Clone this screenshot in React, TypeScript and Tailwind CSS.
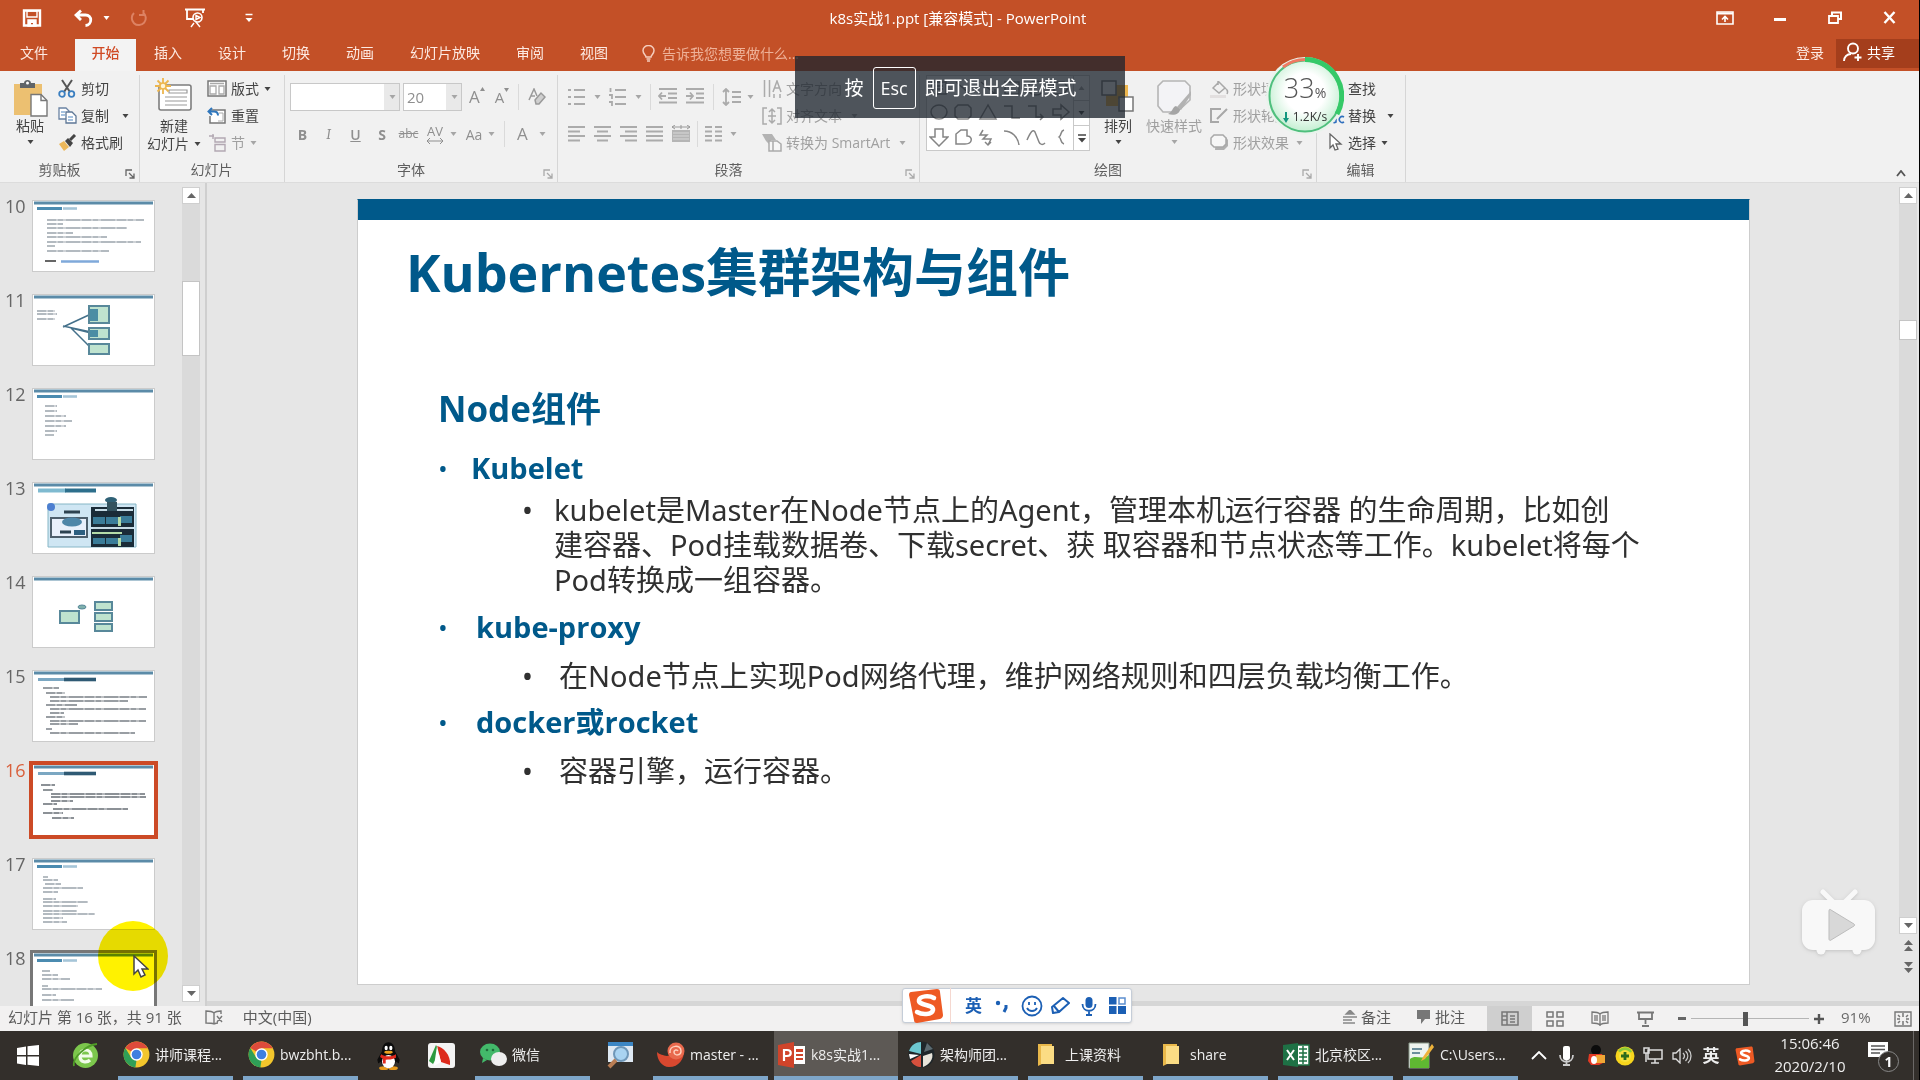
import React from "react";

type Kids = { children?: React.ReactNode };

const dark = "#444444";
const dim = "#a6a6a6";

function Svg({ w, h, children, className = "" }: { w: number; h: number; className?: string } & Kids) {
  return (
    <svg width={w} height={h} viewBox={`0 0 ${w} ${h}`} fill="none" aria-hidden="true" className={`shrink-0 ${className}`}>
      {children}
    </svg>
  );
}

function Caret({ c = dark, className = "" }: { c?: string; className?: string }) {
  return (
    <Svg w={7} h={4} className={className}>
      <path d="M0.5 0h6l-3 4z" fill={c} />
    </Svg>
  );
}

/* ---------- header ---------- */

function TitleBar() {
  return (
    <div className="relative flex h-[39px] items-center pb-[4px] text-white">
      <button aria-label="保存" className="ml-[22px]">
        <Svg w={20} h={18}>
          <path d="M2 1.5h16v15H2z" stroke="#fff" strokeWidth="2.4" />
          <path d="M5 2h10v6H5zM6 11h8v6H6z" stroke="#fff" strokeWidth="1.4" />
          <path d="M6 11h8v6h-3v-3H9v3H6z" fill="#fff" />
        </Svg>
      </button>
      <button aria-label="撤消" className="ml-[32px] flex items-center gap-[10px]">
        <Svg w={19} h={18}>
          <path d="M7 1.5L2 6l5 5M2.5 6h9c7 0 7 10 0 10.5" stroke="#fff" strokeWidth="2.8" />
        </Svg>
        <Caret c="#fff" />
      </button>
      <button aria-label="恢复" className="ml-[20px]" disabled>
        <Svg w={18} h={18}>
          <path d="M4 4a7 7 0 1 0 9-.5M13.5 1v5H9" stroke="#dd8263" strokeWidth="2" />
        </Svg>
      </button>
      <button aria-label="从头开始放映" className="ml-[36px]">
        <Svg w={22} h={20}>
          <path d="M1 1.5h20M3 2v9h6M19 2v3" stroke="#fff" strokeWidth="1.8" />
          <circle cx="13.5" cy="9.5" r="4.5" stroke="#fff" strokeWidth="1.6" />
          <path d="M12 7.5l4 2-4 2zM10 15l-3 4M12 14l4 5" stroke="#fff" strokeWidth="1.4" />
        </Svg>
      </button>
      <button aria-label="自定义快速访问工具栏" className="ml-[39px]">
        <Svg w={8} h={10}>
          <path d="M0.5 1.5h7" stroke="#fff" strokeWidth="1.5" />
          <path d="M0.5 5h7L4 9z" fill="#fff" />
        </Svg>
      </button>
      <h1 className="pointer-events-none absolute inset-x-0 top-0 pr-[3px] text-center text-[15px] leading-[36px]">
        k8s实战1.ppt [兼容模式] - PowerPoint
      </h1>
      <div className="mr-[2px] ml-auto flex items-center">
        <button aria-label="功能区显示选项" className="flex w-[55px] justify-center">
          <Svg w={18} h={14}>
            <path d="M1 1h16v12H1z" stroke="#fff" strokeWidth="1.6" />
            <path d="M1 2.5h16" stroke="#fff" strokeWidth="2" />
            <path d="M9 11V6M6 8.5L9 5.500l3 3" stroke="#fff" strokeWidth="1.6" />
          </Svg>
        </button>
        <button aria-label="最小化" className="flex w-[55px] justify-center pt-[4px]">
          <Svg w={12} h={3}><path d="M0 0h12v3H0z" fill="#fff" /></Svg>
        </button>
        <button aria-label="还原" className="flex w-[55px] justify-center">
          <Svg w={14} h={13}>
            <path d="M4 4V1.5h9V8h-3" stroke="#fff" strokeWidth="2" />
            <path d="M1 5h9v7H1z" stroke="#fff" strokeWidth="1.8" />
          </Svg>
        </button>
        <button aria-label="关闭" className="flex w-[55px] justify-center">
          <Svg w={13} h={13}><path d="M1.5 1l10 11M11.5 1l-10 11" stroke="#fff" strokeWidth="2.4" /></Svg>
        </button>
      </div>
    </div>
  );
}

const tabs = ["插入", "设计", "切换", "动画", "幻灯片放映", "审阅", "视图"];

function TabRow() {
  return (
    <nav className="flex h-[32px] text-[14px] text-[#fdeae3]">
      <button className="w-[75px] pr-[7px] pb-[5px]">文件</button>
      <button className="w-[61px] bg-[#f3f3f3] pb-[5px] font-medium text-[#d04a24]">开始</button>
      {tabs.map((t) => (
        <button key={t} className="px-[18px] pb-[5px]">{t}</button>
      ))}
      <button className="ml-[16px] flex items-center gap-[7px] pb-[3px] text-[#eeb198]">
        <Svg w={13} h={17}>
          <path d="M4 12c0-2-3-3-3-6.5a5.5 5 0 0 1 11 0C12 9 9 10 9 12zM4.5 14h4M5 16h3" stroke="#f5cdbd" strokeWidth="1.5" />
        </Svg>
        告诉我您想要做什么...
      </button>
      <div className="ml-auto flex">
        <button className="mr-[12px] pb-[5px]">登录</button>
        <button className="flex h-[29px] w-[83px] items-center gap-[5px] bg-[#a43e1c] pb-[3px] pl-[7px] text-white">
          <Svg w={19} h={20}>
            <circle cx="10" cy="6.5" r="5" stroke="#fff" strokeWidth="1.9" />
            <path d="M1 19c0-4 3-7 7-7M15 12v7M11.5 15.5h7" stroke="#fff" strokeWidth="1.9" />
          </Svg>
          共享
        </button>
      </div>
    </nav>
  );
}

/* ---------- ribbon ---------- */

function Group({ label, className, launcher, children }: { label: string; className: string; launcher?: string } & Kids) {
  return (
    <section aria-label={label} className={`flex shrink-0 flex-col pt-[4px] ${className}`}>
      <div className="flex h-[107px] flex-col border-r border-[#d6d6d6]">
        <div className="flex h-[83px]">{children}</div>
        <div className={`relative h-[24px] text-center text-[14px] leading-[24px] text-[#5e5e5e] ${launcher ? "pr-[20px]" : "pr-px"}`}>
          {label}
          {launcher && (
            <Svg w={10} h={10} className="absolute right-[4px] bottom-[3px]">
              <path d="M1 7V1h6M4 4l5 5M9 4.5V9H4.5" stroke={launcher} strokeWidth="1.3" />
            </Svg>
          )}
        </div>
      </div>
    </section>
  );
}

function Row({ icon, text, caret, off, gap = "gap-[4px]" }: { icon: React.ReactNode; text: string; caret?: string; off?: boolean; gap?: string }) {
  return (
    <button className={`flex h-[27px] items-center whitespace-nowrap text-[14px] ${gap} ${off ? "text-[#a0a0a0]" : "text-[#444]"}`}>
      <span className="flex w-[20px] shrink-0 justify-center">{icon}</span>
      <span>{text}</span>
      {caret && <Caret c={off ? dim : dark} className={caret} />}
    </button>
  );
}

function Clipboard() {
  return (
    <Group label="剪贴板" className="w-[140px]" launcher="#666">
      <button className="ml-[12px] flex w-[36px] flex-col items-center pt-[4px] text-[14px] leading-[18px] text-[#444]">
        <Svg w={36} h={38}>
          <path d="M2 5h28v31H2z" fill="#ecc071" />
          <path d="M8 9V4h4c0-4 7-4 7 0h4v5z" fill="#5f6468" />
          <circle cx="15.5" cy="4" r="1.5" fill="#fff" />
          <path d="M19 15.5h10l6 6V37H19z" fill="#fff" stroke="#777" strokeWidth="1.4" />
          <path d="M29 15.5v6h6" stroke="#777" strokeWidth="1.4" />
        </Svg>
        粘贴
        <Caret className="mt-[5px]" />
      </button>
      <div className="ml-[9px] flex flex-col">
        <Row text="剪切" icon={
          <Svg w={18} h={19}>
            <path d="M4 1l8 12M14 1L6 13" stroke="#555" strokeWidth="2" />
            <circle cx="4" cy="15" r="2.8" stroke="#3b7fc0" strokeWidth="1.8" />
            <circle cx="13.5" cy="15" r="2.8" stroke="#3b7fc0" strokeWidth="1.8" />
          </Svg>} />
        <Row text="复制" caret="ml-[9px]" icon={
          <Svg w={19} h={17}>
            <path d="M1 1h7l3 3v8H1z" fill="#fff" stroke="#6a83a3" strokeWidth="1.3" />
            <path d="M8 5h6l4 4v7H8z" fill="#fff" stroke="#5d7796" strokeWidth="1.3" />
            <path d="M3 5h4M3 8h4M10 10h5M10 13h5" stroke="#4f86c0" strokeWidth="1.2" />
          </Svg>} />
        <Row text="格式刷" icon={
          <Svg w={19} h={17}>
            <path d="M1 10l5-3 5 6-5 4z" fill="#ecb85b" />
            <path d="M7 7l3-3 5 5-3 4z" fill="#444" />
            <path d="M12 6l5-5" stroke="#444" strokeWidth="3" />
          </Svg>} />
      </div>
    </Group>
  );
}

function Slides() {
  return (
    <Group label="幻灯片" className="w-[145px]">
      <button className="ml-[5px] flex w-[58px] flex-col items-center pt-[3px] text-[14px] leading-[18px] text-[#444]">
        <Svg w={38} h={39}>
          <rect x="4" y="7" width="32" height="25" rx="2" fill="#fff" stroke="#7d7d7d" strokeWidth="1.6" />
          <path d="M14 12h18v3H14zM10 19h22M10 23h22M10 27h22" stroke="#9a9a9a" strokeWidth="1.2" />
          <path d="M8 0v16M0 8h16M2.5 2.5l11 11M13.5 2.5l-11 11" stroke="#edb64e" strokeWidth="1.8" />
          <circle cx="8" cy="8" r="3" fill="#fff4d6" stroke="#edb64e" strokeWidth="1.5" />
        </Svg>
        <span>新建</span>
        <span className="flex items-center gap-[5px] whitespace-nowrap">幻灯片<Caret /></span>
      </button>
      <div className="ml-[4px] flex flex-col">
        <Row text="版式" caret="ml-[1px]" icon={
          <Svg w={20} h={17}>
            <path d="M1 1h18v15H1z" fill="#fff" stroke="#777" strokeWidth="1.5" />
            <path d="M3 3.5h14M3 6h6v8H3zM12 6h5v8h-5z" stroke="#aaa" strokeWidth="1.3" />
          </Svg>} />
        <Row text="重置" icon={
          <Svg w={20} h={17}>
            <path d="M4 3h14v13H3V9" fill="#fff" stroke="#777" strokeWidth="1.5" />
            <path d="M12 6h4v8h-5" stroke="#aaa" />
            <path d="M5 1L1.5 4.500 5 8M2 4.500h5c3 0 4 2 4 4" stroke="#2f76bc" strokeWidth="2" />
          </Svg>} />
        <Row off text="节" caret="ml-[1px]" icon={
          <Svg w={18} h={18}>
            <path d="M1 2h5M5 0v5M7 4h10v4H7zM7 10.5h10V17H7z" stroke="#b2a8b2" strokeWidth="1.4" />
          </Svg>} />
      </div>
    </Group>
  );
}

const VSep = ({ className = "" }: { className?: string }) => <span className={`h-[26px] w-px shrink-0 bg-[#dadada] ${className}`} />;

function FontGroup() {
  return (
    <Group label="字体" className="w-[273px]" launcher="#aaa">
      <div className="flex w-full flex-col pt-[4px] pl-[5px] text-[#8f8f8f]">
        <div className="flex h-[36px] items-center">
          <select aria-label="字体" className="h-[28px] w-[110px] appearance-none border border-[#c8c8c8] bg-white bg-[linear-gradient(to_left,#e9e9e9_15px,transparent_15px)]"><option></option></select>
          <Caret c={dim} className="-ml-[11px] mr-[4px]" />
          <select aria-label="字号" defaultValue="20" className="ml-[3px] h-[28px] w-[59px] appearance-none border border-[#c8c8c8] bg-white bg-[linear-gradient(to_left,#e9e9e9_15px,transparent_15px)] pl-[3px] text-[15px]"><option>20</option></select>
          <Caret c={dim} className="-ml-[11px] mr-[4px]" />
          <button aria-label="增大字号" className="ml-[7px] flex text-[17px]">A<Svg w={5} h={4} className="mt-[3px]"><path d="M0 4h5L2.500 0z" fill="#8f8f8f" /></Svg></button>
          <button aria-label="减小字号" className="ml-[10px] flex text-[15px]">A<Svg w={5} h={4} className="mt-[2px]"><path d="M0 0h5L2.500 4z" fill="#8f8f8f" /></Svg></button>
          <VSep className="ml-[9px]" />
          <button aria-label="清除格式" className="ml-[9px]">
            <Svg w={18} h={18}>
              <path d="M1 12L6 1l3 7M3 8h4" stroke="#9a9a9a" strokeWidth="1.5" />
              <path d="M7 12l6-7 4 4-6 7H8z" stroke="#9a9a9a" strokeWidth="1.5" fill="#cfcfcf" />
            </Svg>
          </button>
        </div>
        <div className="flex h-[38px] items-center text-[14px]">
          <button className="w-[25px] font-bold">B</button>
          <button className="w-[27px] font-serif italic">I</button>
          <button className="w-[27px] font-semibold underline">U</button>
          <button className="w-[26px] font-bold">S</button>
          <button className="w-[27px] text-[12px] line-through">abc</button>
          <button aria-label="字符间距" className="flex w-[39px] items-center justify-center gap-[6px]">
            <span className="flex flex-col items-center text-[13px] leading-[14px]">AV
              <Svg w={18} h={6}><path d="M1 3h16M4 0L1 3l3 3M14 0l3 3-3 3" stroke="#8f8f8f" /></Svg>
            </span>
            <Caret c={dim} />
          </button>
          <button className="flex w-[39px] items-center justify-center gap-[6px]">Aa<Caret c={dim} /></button>
          <VSep className="ml-[4px]" />
          <button className="ml-[12px] flex items-center gap-[11px] text-[17px]">A<Caret c={dim} /></button>
        </div>
      </div>
    </Group>
  );
}

function Lines({ d }: { d: string }) {
  return <Svg w={20} h={18}><path d={d} stroke="#ababab" strokeWidth="1.8" /></Svg>;
}

function Paragraph() {
  return (
    <Group label="段落" className="w-[362px]" launcher="#aaa">
      <div className="flex w-[200px] shrink-0 flex-col pt-[4px] pl-[9px]">
        <div className="flex h-[36px] items-center">
          <button aria-label="项目符号" className="flex items-center gap-[7px]"><Lines d="M1 2h3M1 9h3M1 16h3M7 2h11M7 9h11M7 16h11" /><Caret c={dim} /></button>
          <button aria-label="编号" className="ml-[7px] flex items-center gap-[7px]"><Lines d="M2.5 0v4M1 7h3v4M1 14h3v4M7 2h11M7 9h11M7 16h11" /><Caret c={dim} /></button>
          <VSep className="ml-[8px]" />
          <button aria-label="减少缩进量" className="ml-[7px]"><Lines d="M1 1h18M10 5.5h9M10 10h9M1 14.5h18M8 8H1M4 4.5L1 8l3 3.5" /></button>
          <button aria-label="增加缩进量" className="ml-[7px]"><Lines d="M1 1h18M11 5.5h8M11 10h8M1 14.5h18M1 8h7M5 4.5L8 8l-3 3.500" /></button>
          <VSep className="ml-[8px]" />
          <button aria-label="行距" className="ml-[8px] flex items-center gap-[5px]"><Lines d="M4 1v16M1 4l3-3 3 3M1 14l3 3 3-3M10 4h9M10 9h9M10 14h9" /><Caret c={dim} /></button>
        </div>
        <div className="flex h-[38px] items-center gap-[6px]">
          <button aria-label="左对齐"><Lines d="M1 2h17M1 6.5h12M1 11h17M1 15.5h12" /></button>
          <button aria-label="居中"><Lines d="M1 2h17M4 6.5h11M1 11h17M4 15.5h11" /></button>
          <button aria-label="右对齐"><Lines d="M1 2h17M6 6.5h12M1 11h17M6 15.5h12" /></button>
          <button aria-label="两端对齐"><Lines d="M1 2h17M1 6.5h17M1 11h17M1 15.5h17" /></button>
          <button aria-label="分散对齐">
            <Svg w={20} h={18}>
              <path d="M1 5h18v12H1z" fill="#b5b5b5" />
              <path d="M1 2h18M4 0L1 2l3 2M16 0l3 2-3 2M10 0v4" stroke="#999" />
              <path d="M2 8h16M2 11h16M2 14h16" stroke="#d8d8d8" />
            </Svg>
          </button>
          <VSep />
          <button aria-label="分栏" className="flex items-center gap-[6px]"><Lines d="M1 2h7M1 6.5h7M1 11h7M1 15.5h7M11 2h7M11 6.5h7M11 11h7M11 15.5h7" /><Caret c={dim} /></button>
        </div>
      </div>
      <div className="ml-[4px] flex flex-col">
        <Row off text="文字方向" caret="ml-[5px]" icon={
          <Svg w={19} h={18}><path d="M1.5 0v17M6.5 0v17M10 12l4-11 4 11M11.5 8h5M11 14v4M17 14v4" stroke="#ababab" strokeWidth="1.5" /></Svg>} />
        <Row off text="对齐文本" caret="ml-[5px]" icon={
          <Svg w={20} h={18}><path d="M5 1H1v16h4M15 1h4v16h-4M10 2v14M7 5l3-3 3 3M7 13l3 3 3-3M6 9h8" stroke="#ababab" strokeWidth="1.5" /></Svg>} />
        <Row off text="转换为 SmartArt" caret="ml-[5px]" icon={
          <Svg w={20} h={19}>
            <path d="M0 1h10l4 6H9l-2 4-3-3z" fill="#b3b3b3" />
            <path d="M7 8h8l4 3v7H7zM11 8v10" fill="#f6f6f6" stroke="#ababab" strokeWidth="1.5" />
          </Svg>} />
      </div>
    </Group>
  );
}

const shapes = [
  "M3 3h14v12H3zM6 7h8M6 10h8", "M3 3l14 12", "M3 3l14 12M17 10v5h-5", "M3 3h14v12H3z", "M2 9a8 7 0 1 0 16 0 8 7 0 1 0-16 0", "M3 3h10l4 6-4 6H3z",
  "M2 9a8 7 0 1 0 16 0 8 7 0 1 0-16 0", "M5 2h10l3 3v8l-3 3H5l-3-3V5z", "M10 2L2 16h16z", "M2 3h8v12h8", "M2 3h8v11h7M14 11l3 3-3 3", "M2 6h8V2l8 7-8 7v-4H2z",
  "M6 1h8v8h5l-9 9-9-9h5z", "M3 16V6l5-4h6v6c6 0 6 8-2 8z", "M5 2L2 7h7l-4 4h8l-3 6M7 14l3 3 3-3", "M2 3c8 0 14 6 15 14", "M1 12C5 3 7 1 9 4l4 10c1 3 4 3 6 1", "M13 2c-4 1-2 5-5 7 3 2 1 6 5 7",
];

function Drawing() {
  return (
    <Group label="绘图" className="w-[397px]" launcher="#aaa">
      <div className="ml-[6px] flex h-[76px] w-[164px] shrink-0 border border-[#c9c9c9] bg-white">
        <div className="grid flex-1 grid-cols-6 grid-rows-3">
          {shapes.map((d, i) => (
            <button key={i} aria-label={`形状 ${i + 1}`} className="flex items-center justify-center">
              <Svg w={20} h={19}><path d={d} stroke="#858585" strokeWidth="1.5" /></Svg>
            </button>
          ))}
        </div>
        <div className="flex w-[16px] flex-col divide-y divide-[#c9c9c9] border-l border-[#c9c9c9]">
          <button aria-label="上一行" className="flex flex-1 items-center justify-center"><Caret c={dim} className="rotate-180" /></button>
          <button aria-label="下一行" className="flex flex-1 items-center justify-center"><Caret /></button>
          <button aria-label="其他" className="flex flex-1 items-center justify-center">
            <Svg w={8} h={9}><path d="M0 1h8" stroke={dark} strokeWidth="1.5" /><path d="M0 4h8L4 8.500z" fill={dark} /></Svg>
          </button>
        </div>
      </div>
      <button className="ml-[10px] flex w-[36px] flex-col items-center pt-[4px] text-[14px] leading-[18px] text-[#444]">
        <Svg w={36} h={38}>
          <path d="M14 6h14v14H14zM6 15h12v12H6z" fill="#edb64e" />
          <path d="M2 2h14v14H2zM19 18h14v14H19z" fill="#fff" stroke="#777" strokeWidth="1.5" />
        </Svg>
        排列
        <Caret className="mt-[5px]" />
      </button>
      <button className="ml-[8px] flex w-[60px] flex-col items-center pt-[4px] text-[14px] leading-[18px] text-[#a0a0a0]">
        <Svg w={38} h={38}>
          <path d="M8 2h22l5 5v14L22 33H8l-5-6V7z" fill="#f3f3f6" stroke="#b5b5b5" strokeWidth="1.6" />
          <path d="M36 12L22 28l4 3 10-15z" fill="#b2b2b2" />
          <path d="M21 27c-4 1-3 6-8 8 6 2 12 0 12-5z" fill="#a5a5a5" />
        </Svg>
        <span className="whitespace-nowrap">快速样式</span>
        <Caret c={dim} className="mt-[5px]" />
      </button>
      <div className="ml-[5px] flex flex-col">
        <Row off text="形状填充" caret="ml-[1px]" icon={
          <Svg w={19} h={18}><path d="M3 8l6-6 6 6-6 5zM8 5V1M15 8c3 2 3 4 2 6" stroke="#a8a8a8" strokeWidth="1.5" /><path d="M0 15h16v3H0z" fill="#e2dfdf" /></Svg>} />
        <Row off text="形状轮廓" caret="ml-[1px]" icon={
          <Svg w={19} h={17}><path d="M11 2H1v13h8M17 2L7 12" stroke="#a8a8a8" strokeWidth="2" /></Svg>} />
        <Row off text="形状效果" caret="ml-[3px]" icon={
          <Svg w={19} h={17}><path d="M6 3h10l2 3v6l-4 4H5z" fill="#b0b0b0" /><path d="M4 1h9l3 3v6l-3 3H4l-3-3V4z" fill="#f6f6f6" stroke="#a8a8a8" strokeWidth="1.5" /></Svg>} />
      </div>
    </Group>
  );
}

function Editing() {
  return (
    <Group label="编辑" className="w-[89px]">
      <div className="ml-[9px] flex flex-col">
        <Row text="查找" gap="gap-[2px]" icon={<Svg w={16} h={16}><circle cx="9" cy="6" r="4.5" stroke="#555" strokeWidth="2" /><path d="M6 10l-5 5" stroke="#555" strokeWidth="2" /></Svg>} />
        <Row text="替换" gap="gap-[2px]" caret="ml-[9px]" icon={
          <Svg w={18} h={17}><path d="M2 3h8v4M7 5l3 3 3-3" stroke="#555" strokeWidth="1.3" /><path d="M9 10a3 3 0 1 0 0 5V9M17 10a3 3 0 1 0 0 5" stroke="#2f6fbd" strokeWidth="1.6" /></Svg>} />
        <Row text="选择" gap="gap-[2px]" caret="ml-[3px]" icon={
          <Svg w={14} h={19}><path d="M1 1v14l3-3 2 5 3-1-2-5h5z" fill="#fff" stroke="#666" strokeWidth="1.3" /></Svg>} />
      </div>
    </Group>
  );
}

function SpeedBall() {
  return (
    <div className="absolute top-[57px] left-[1266px] size-[78px]">
      <svg viewBox="0 0 78 78" aria-hidden="true" className="absolute inset-0">
        <defs>
          <radialGradient id="ball" cx="50%" cy="45%" r="55%">
            <stop offset="0.5" stopColor="#ffffff" />
            <stop offset="1" stopColor="#c4efd2" />
          </radialGradient>
        </defs>
        <circle cx="39" cy="39" r="39" fill="#e9f3ec" />
        <circle cx="39" cy="39" r="35.5" fill="url(#ball)" stroke="#4fbf7d" strokeWidth="2" />
        <path d="M39 2.5A36.5 36.5 0 0 1 71 57" fill="none" stroke="#35c968" strokeWidth="5" />
        <path d="M17 10A36.5 36.5 0 0 1 39 2.5" fill="none" stroke="#ef7a62" strokeWidth="3" />
      </svg>
      <div className="relative flex h-full flex-col items-center pt-[15px] text-[#555]">
        <span className="text-[27px] leading-[32px] font-light">33<span className="text-[14px] font-normal">%</span></span>
        <span className="flex items-center gap-[4px] text-[12px] leading-[16px] text-[#333]">
          <Svg w={6} h={11}><path d="M2 0h2v6h2l-3 5-3-5h2z" fill="#13977f" /></Svg>1.2K/s
        </span>
      </div>
    </div>
  );
}

function EscHint() {
  return (
    <div role="status" className="absolute top-[56px] left-1/2 flex h-[62px] w-[330px] -translate-x-1/2 items-center justify-center gap-[9px] bg-[#1c242e]/77 pt-[2px] pl-[2px] text-[19px] whitespace-nowrap text-white">
      按
      <kbd className="flex h-[42px] w-[43px] items-center justify-center rounded-[3px] border border-white font-[inherit] text-[18px]">Esc</kbd>
      即可退出全屏模式
    </div>
  );
}

/* ---------- thumbnails ---------- */

type Bar = [number, number, number];

function TextBars({ bars, c = "#b3bac0" }: { bars: Bar[]; c?: string }) {
  return (
    <g stroke={c} strokeWidth="1.8">
      {bars.map(([x, y, w], i) => (
        <g key={i}>
          <path d={`M${x} ${y}h${w}`} strokeOpacity="0.65" />
          <path d={`M${x} ${y}h${w}`} strokeDasharray="9 2 5 3 14 2" />
        </g>
      ))}
    </g>
  );
}

const titleLong = (
  <>
    <path d="M5 8.5h26" stroke="#7ba7c2" strokeWidth="3" />
    <path d="M31 8.5h32" stroke="#2f5a74" strokeWidth="3.6" />
  </>
);
const titleShort = (
  <>
    <path d="M4 7.5h25" stroke="#4b8bb0" strokeWidth="3" />
    <path d="M30 7.5h14" stroke="#a5c5d8" strokeWidth="2.6" />
  </>
);

const green = { fill: "#bfe3cf", stroke: "#58889a", strokeWidth: 2 };

const thumbs: { n: number; art: React.ReactNode }[] = [
  { n: 10, art: <>{titleShort}<TextBars bars={[[14, 19, 97], [14, 23, 16], [14, 27, 80], [14, 32, 26], [14, 36, 60], [14, 41, 94], [14, 45, 8], [14, 50, 62]]} /><path d="M12 60h11" stroke="#666" strokeWidth="2" /><path d="M28 60.5h38" stroke="#7fa9da" strokeWidth="2.4" /></> },
  { n: 11, art: <>
      <TextBars bars={[[4, 16, 18], [4, 19, 20], [4, 24, 18]]} />
      <path d="M30 32l28-13M38 33l20 5M38 33l18 18M30 31l28 6" stroke="#44708a" strokeWidth="1.5" />
      <rect x="56" y="11" width="20" height="17" {...green} /><rect x="56" y="33" width="20" height="11" {...green} /><rect x="56" y="49" width="20" height="10" {...green} />
      <path d="M57 14h8v12h-8zM57 35h8v7h-8z" fill="#4b8da4" />
    </> },
  { n: 12, art: <>{titleShort}<TextBars bars={[[12, 17, 12], [12, 22, 12], [12, 27, 21], [12, 32, 27], [12, 37, 21], [12, 42, 12], [12, 46, 9]]} /></> },
  { n: 13, art: <>
      <path d="M5 7.5h28" stroke="#7fbad0" strokeWidth="4" /><path d="M32 7.5h31" stroke="#2d6f8c" strokeWidth="4" />
      <path d="M15 21h88v43H15z" fill="#cfe6f3" stroke="#86b6c6" />
      <circle cx="18" cy="24" r="4" fill="#4d7fd0" />
      <path d="M18 35h36v19H18z" fill="#e8f0fb" stroke="#4d5f6c" strokeWidth="2" />
      <ellipse cx="39" cy="39" rx="10" ry="4.500" fill="#4e86a8" />
      <path d="M31 29h16M27 49h11" stroke="#2c4250" strokeWidth="3" /><path d="M41 47h11v5H41z" fill="#2c5f80" />
      <path d="M58 24h43v20H58zM58 46h43v18H58z" fill="#1a2c38" />
      <path d="M60 34h12v7H60zM73 34h12v7H73zM87 33h12v7H87zM60 55h12v6H60zM73 55h12v6H73zM87 52h12v7H87z" fill="#3a7c98" />
      <path d="M85 34h3v9h-3zM59 49h30v2H59zM85 55h3v8h-3z" fill="#b5dca8" />
      <path d="M62 27h38M60 45h40" stroke="#c7dce6" strokeWidth="2" />
      <ellipse cx="78" cy="17" rx="6" ry="3" fill="#2f6176" /><path d="M74 19h10v9H74z" fill="#34535f" />
    </> },
  { n: 14, art: <>
      <rect x="27" y="34" width="19" height="12" {...green} /><ellipse cx="49" cy="30" rx="4" ry="2" fill="#7fb0ac" stroke="#58889a" />
      <rect x="62" y="25" width="17" height="8" {...green} /><rect x="62" y="36" width="17" height="8" {...green} /><rect x="62" y="47" width="17" height="7" {...green} />
    </> },
  { n: 15, art: <>{titleLong}<TextBars c="#999ea3" bars={[[10, 17, 16], [13, 22, 19], [17, 26, 97], [17, 30, 78], [13, 34, 31], [17, 38, 96], [17, 42, 14], [13, 46, 19], [17, 50, 96], [17, 53, 28], [13, 58, 6], [17, 62, 85]]} /></> },
  { n: 16, art: <>{titleLong}<TextBars c="#8c9196" bars={[[8, 20, 14], [10, 25, 10], [18, 29, 94], [18, 32, 95], [18, 36, 22], [10, 39, 14], [20, 44, 75], [10, 48, 20], [19, 53, 22]]} /></> },
  { n: 17, art: <>{titleShort}<TextBars bars={[[10, 18, 5], [10, 21, 15], [12, 25, 16], [10, 29, 40], [10, 33, 15], [10, 40, 13], [10, 43, 45], [10, 47, 35], [10, 52, 34], [10, 55, 52], [10, 59, 20], [10, 63, 24]]} /></> },
  { n: 18, art: <>{titleShort}<TextBars bars={[[9, 18, 8], [9, 22, 16], [9, 26, 28], [9, 33, 6], [9, 36, 60], [9, 42, 14], [9, 47, 32]]} /></> },
];

function ScrollButton({ up, label }: { up?: boolean; label: string }) {
  return (
    <button aria-label={label} className="flex h-[17px] w-full shrink-0 items-center justify-center border border-[#cfcfcf] bg-white">
      <Svg w={9} h={5} className={up ? "rotate-180" : ""}><path d="M0 0h9L4.500 5z" fill="#666" /></Svg>
    </button>
  );
}

function ThumbPane() {
  return (
    <aside className="flex w-[207px] shrink-0 border-r-2 border-[#cfcfcf] pt-[4px]">
      <ol className="flex min-h-0 flex-1 flex-col gap-[24px] overflow-hidden pt-[14px]">
        {thumbs.map(({ n, art }) => (
          <li key={n} className="relative flex h-[70px] shrink-0">
            <span className={`w-[33px] shrink-0 pl-[5px] text-[18px] leading-[10px] ${n === 16 ? "text-[#d9603c]" : "text-[#666]"}`}>{n}</span>
            <button
              aria-label={`幻灯片 ${n}`}
              className={
                n === 16 ? "h-[70px] outline-4 outline-[#cc4a26]" : n === 18 ? "h-[70px] outline-3 outline-[#777]" : "h-[70px] outline outline-[#cbcbcb]"
              }
            >
              <svg width="121" height="70" viewBox="0 0 121 70" fill="none" aria-hidden="true" className="bg-white">
                <path d="M1 2h119" stroke="#5b8ba8" strokeWidth="3" />
                {art}
              </svg>
            </button>
            {n === 18 && (
              <>
                <span className="absolute top-[-32px] left-[98px] size-[70px] rounded-full bg-[#fff200] mix-blend-multiply" />
                <Svg w={16} h={24} className="absolute top-[2px] left-[133px]">
                  <path d="M1 1v18l4-4 3 7 4-2-3-6h6z" fill="#fff" stroke="#444" strokeWidth="1.5" />
                </Svg>
              </>
            )}
          </li>
        ))}
      </ol>
      <div className="mr-[5px] mb-[4px] flex w-[18px] flex-col bg-[#dadada]">
        <ScrollButton up label="向上滚动" />
        <div className="mt-[77px] h-[75px] border border-[#c4c4c4] bg-white" />
        <div className="flex-1" />
        <ScrollButton label="向下滚动" />
      </div>
    </aside>
  );
}

/* ---------- slide ---------- */

function Item({ title, indent, body, className, bodyClass }: { title: string; indent: string; body: React.ReactNode; className: string; bodyClass: string }) {
  return (
    <li className={className}>
      <div className="flex items-center text-[29px] leading-[36px] font-bold text-[#00598a]">
        <span className={`${indent} text-[26px] font-normal`}>•</span>{title}
      </div>
      <ul>
        <li className={`flex font-['Noto_Sans','Noto_Sans_CJK_SC',sans-serif] text-[29px] leading-[35px] whitespace-nowrap text-[#303030] ${bodyClass}`}>{body}</li>
      </ul>
    </li>
  );
}

function Slide() {
  return (
    <article className="flex-1 border border-[#cdcdcd] border-t-[#00598a] bg-white">
      <div className="h-[20px] bg-[#00598a]" />
      <h2 className="mt-[14px] pl-[48px] text-[52px] leading-[76px] font-bold text-[#00598a]">Kubernetes集群架构与组件</h2>
      <div className="mt-[74px] pl-[80px]">
        <h3 className="text-[35px] leading-[50px] font-bold text-[#00598a]">Node组件</h3>
        <ul>
          <Item
            title="Kubelet"
            indent="w-[33px]"
            className="mt-[16px]"
            bodyClass="mt-[6px] pl-[84px]"
            body={<><span className="w-[32px]">•</span><p>kubelet是Master在Node节点上的Agent，管理本机运行容器 的生命周期，比如创<br />建容器、Pod挂载数据卷、下载secret、获 取容器和节点状态等工作。kubelet将每个<br />Pod转换成一组容器。</p></>}
          />
          <Item
            title="kube-proxy"
            indent="w-[38px]"
            className="mt-[12px]"
            bodyClass="mt-[13px] pl-[84px]"
            body={<><span className="w-[37px]">•</span><p>在Node节点上实现Pod网络代理，维护网络规则和四层负载均衡工作。</p></>}
          />
          <Item
            title="docker或rocket"
            indent="w-[38px]"
            className="mt-[11px]"
            bodyClass="mt-[13px] pl-[84px]"
            body={<><span className="w-[37px]">•</span><p>容器引擎，运行容器。</p></>}
          />
        </ul>
      </div>
    </article>
  );
}

function Stage() {
  return (
    <main className="flex min-w-0 flex-1 flex-col">
      <div className="flex min-h-0 flex-1">
        <div className="flex min-w-0 flex-1 pt-[16px] pr-[149px] pb-[16px] pl-[150px]"><Slide /></div>
        <div className="mt-[4px] mr-[2px] flex w-[18px] flex-col items-center">
          <div className="flex w-full flex-1 flex-col bg-[#dadada]">
            <ScrollButton up label="向上滚动" />
            <div className="mt-[116px] h-[20px] border border-[#c4c4c4] bg-white" />
            <div className="flex-1" />
            <ScrollButton label="向下滚动" />
          </div>
          <button aria-label="上一张幻灯片" className="mt-[6px]"><Svg w={9} h={12}><path d="M0 5h9L4.500 0zM0 11h9L4.500 6z" fill="#666" /></Svg></button>
          <button aria-label="下一张幻灯片" className="mt-[9px] mb-[28px]"><Svg w={9} h={12}><path d="M0 1h9L4.500 6zM0 7h9l-4.500 5z" fill="#666" /></Svg></button>
        </div>
      </div>
      <div className="h-[5px] bg-[#d6d6d6]" />
    </main>
  );
}

/* ---------- status bar ---------- */

function StatusBar() {
  return (
    <footer className="flex h-[25px] shrink-0 items-center bg-[#f2f1f1] pr-[7px] pb-[3px] text-[15px] leading-[22px] whitespace-nowrap text-[#5c5c5c]">
      <span className="ml-[8px]">幻灯片 第 16 张，共 91 张</span>
      <button aria-label="拼写检查" className="ml-[23px]">
        <Svg w={19} h={15}><path d="M9 3v11M9 3C7 1 4 1 1 1v12c3 0 6 0 8 1M9 3c2-2 4-2 7-2v3M9 14c2-1 3-1 4-1M12 6l5 6M17 6l-5 6" stroke="#777" strokeWidth="1.4" /></Svg>
      </button>
      <button className="ml-[19px]">中文(中国)</button>
      <div className="-mb-[3px] ml-auto flex h-[25px] items-center">
        <button className="flex items-center gap-[4px] pb-[3px]"><Svg w={14} h={14}><path d="M7 0l4 4H3zM0 7h14M0 10h9M0 13h12" fill="#888" stroke="#888" strokeWidth="1.3" /></Svg>备注</button>
        <button className="ml-[25px] flex items-center gap-[4px] pb-[3px]"><Svg w={15} h={14}><path d="M1 0h13v9H9l-4 5V9H1z" fill="#777" /></Svg>批注</button>
        <button aria-label="普通视图" className="ml-[22px] flex h-full w-[45px] items-center justify-center bg-[#cfcfcf]"><Svg w={18} h={15}><path d="M1 1h16v13H1zM6 1v13M9 5h5M9 8h5M1 5h5M1 9h5M9 11h5" stroke="#777" strokeWidth="1.5" /></Svg></button>
        <button aria-label="幻灯片浏览" className="ml-[14px]"><Svg w={18} h={16}><path d="M1 1h6v5H1zM11 1h6v5h-6zM1 10h6v5H1zM11 10h6v5h-6z" stroke="#777" strokeWidth="1.5" /></Svg></button>
        <button aria-label="阅读视图" className="ml-[27px]"><Svg w={18} h={15}><path d="M9 3v12M9 3C7 1 4 1 1 1v11c3 0 6 0 8 2M9 3c2-2 5-2 8-2v11c-3 0-6 0-8 2M4 4v6M6 4v6M12 4v6M14 4v6" stroke="#777" strokeWidth="1.3" /></Svg></button>
        <button aria-label="幻灯片放映" className="ml-[28px]"><Svg w={17} h={16}><path d="M0 1.5h17M2 2v6h13V2M8.5 8v5M5 15h7" stroke="#777" strokeWidth="1.8" /></Svg></button>
        <button aria-label="缩小" className="ml-[24px]"><Svg w={8} h={3}><path d="M0 0h8v3H0z" fill="#666" /></Svg></button>
        <input aria-label="缩放" type="range" defaultValue={46} className="mx-[5px] h-[16px] w-[118px] appearance-none bg-[linear-gradient(#b5b5b5,#b5b5b5)] bg-[length:100%_1px] bg-center bg-no-repeat [&::-webkit-slider-thumb]:h-[14px] [&::-webkit-slider-thumb]:w-[5px] [&::-webkit-slider-thumb]:appearance-none [&::-webkit-slider-thumb]:bg-[#555]" />
        <button aria-label="放大"><Svg w={10} h={10}><path d="M5 0v10M0 5h10" stroke="#555" strokeWidth="2.4" /></Svg></button>
        <span className="ml-[17px] w-[40px] pb-[3px] text-[#6a6a6a]">91%</span>
        <button aria-label="适应窗口" className="ml-[13px]"><Svg w={18} h={16}><path d="M1 1h16v14H1z" stroke="#777" strokeWidth="1.4" /><path d="M9 2v4M9 10v4M3 8h3M12 8h3M4 4l2 2M14 4l-2 2M4 12l2-2M14 12l-2-2" stroke="#777" strokeWidth="1.5" /></Svg></button>
      </div>
    </footer>
  );
}

function SogouS({ s }: { s: number }) {
  return (
    <svg width={s} height={s} viewBox="0 0 36 36" fill="none" aria-hidden="true" className="shrink-0">
      <path d="M3 4L29 1c2 0 3 1 3 3l3 23c0 2-1 3-3 4L9 35c-2 0-3-1-3-3L1 7c0-2 1-3 2-3z" fill="#ee5a24" />
      <path d="M26 10c-5-3-14-2-15 2-1 6 15 4 14 10-1 5-11 5-16 2" stroke="#fff" strokeWidth="4.5" strokeLinecap="round" />
    </svg>
  );
}

function SogouBar() {
  return (
    <div className="absolute bottom-[57px] left-[902px] flex h-[35px] w-[230px] items-center rounded-[3px] border border-[#c5cdd8] bg-white shadow">
      <span className="ml-[5px] w-[43px] border-r border-[#f5d8d0]"><SogouS s={36} /></span>
      <span className="ml-[14px] text-[17px] font-bold text-[#1b5fb4]">英</span>
      <button aria-label="标点" className="ml-[13px]"><Svg w={14} h={16}><circle cx="3" cy="5" r="2.2" fill="#1b5fb4" /><path d="M11 7v3l-2 4" stroke="#1b5fb4" strokeWidth="3" /></Svg></button>
      <button aria-label="表情" className="ml-[12px]"><Svg w={22} h={22}><circle cx="11" cy="11" r="9.5" stroke="#1b5fb4" strokeWidth="1.8" /><path d="M8 7v3M14 7v3M6 13c2 4 8 4 10 0" stroke="#1b5fb4" strokeWidth="1.8" /></Svg></button>
      <button aria-label="手写" className="ml-[8px]"><Svg w={19} h={19}><path d="M2 17l-1-6L12 2l6 5L8 16zM3 10l5 6" stroke="#1b5fb4" strokeWidth="2" strokeLinejoin="round" /></Svg></button>
      <button aria-label="语音" className="ml-[11px]"><Svg w={16} h={20}><rect x="4.5" y="1" width="7" height="11" rx="3.5" fill="#1b5fb4" /><path d="M1.5 8c0 9 13 9 13 0M8 14v5M5 19h6" stroke="#1b5fb4" strokeWidth="1.8" /></Svg></button>
      <button aria-label="工具箱" className="ml-[12px]"><Svg w={17} h={17}><path d="M0 0h7.5v7.5H0zM0 9h7.5v8H0zM9 9h8v8H9z" fill="#1b5fb4" /><path d="M10 1h6v6h-6z" stroke="#5c8fd0" strokeWidth="1.5" /></Svg></button>
    </div>
  );
}

/* ---------- taskbar ---------- */

function Task({ icon, text, active, className = "mr-[10px] w-[115px]" }: { icon: React.ReactNode; text: string; active?: boolean; className?: string }) {
  return (
    <button className={`flex h-full shrink-0 items-center gap-[5px] overflow-hidden border-b-4 border-[#7ea6c9] pt-[2px] pl-[4px] whitespace-nowrap ${active ? "bg-[#5d5955]" : ""} ${className}`}>
      <span className="flex w-[28px] shrink-0 justify-center">{icon}</span>
      {text}
    </button>
  );
}

const chrome = (
  <svg width="27" height="27" viewBox="0 0 48 48" aria-hidden="true">
    <circle cx="24" cy="24" r="23" fill="#f3c62c" />
    <path d="M24 24L4.1 12.5A23 23 0 0 1 43.9 12.5L44 13H24z" fill="#dd4b3b" />
    <path d="M4.1 12.5L14.5 29.5 24 34 22 47A23 23 0 0 1 4.1 12.5z" fill="#2f9f57" />
    <circle cx="24" cy="24" r="11" fill="#fff" />
    <circle cx="24" cy="24" r="8.5" fill="#3f7fe0" />
  </svg>
);

const folder = (
  <Svg w={18} h={24}><path d="M1 1h14v4h2v16H5l-4 2z" fill="#e9b84a" /><path d="M4 3h13v18H4z" fill="#fbdc84" /></Svg>
);

function Qq({ s }: { s: number }) {
  return (
    <svg width={s} height={s + 3} viewBox="0 0 26 30" aria-hidden="true">
      <ellipse cx="8" cy="28" rx="5" ry="2" fill="#e89a1c" /><ellipse cx="18" cy="28" rx="5" ry="2" fill="#e89a1c" />
      <path d="M6 10c0-13 14-13 14 0l5 9-1 4-3-2c-2 9-14 9-16 0l-3 2-1-4z" fill="#0c0c0c" />
      <ellipse cx="13" cy="21" rx="7" ry="7" fill="#fff" />
      <ellipse cx="10.5" cy="6.5" rx="1.7" ry="2.4" fill="#fff" /><ellipse cx="15.5" cy="6.5" rx="1.7" ry="2.4" fill="#fff" />
      <ellipse cx="13" cy="11" rx="4.5" ry="1.6" fill="#eda21f" />
      <path d="M5 13c5 3 11 3 16 0v4c-4 2-8 2-11 2v4H7v-5l-3-2z" fill="#e12a1d" />
    </svg>
  );
}

function Taskbar() {
  return (
    <footer className="flex h-[49px] shrink-0 items-center bg-[#332f2b] text-[14px] text-[#eee]">
      <button aria-label="开始" className="flex w-[56px] justify-center"><Svg w={22} h={21}><path d="M0 3l9-1.5V10H0zM10.5 1.2L22 0v10H10.5zM0 11.5h9V20l-9-1.5zM10.5 11.5H22V21l-11.5-1.3z" fill="#fff" /></Svg></button>
      <button aria-label="浏览器" className="mr-[4px] flex w-[58px] justify-center">
        <Svg w={27} h={27}>
          <circle cx="13.5" cy="13.5" r="12.5" fill="#7cc74c" />
          <path d="M8 14h11c0-8-11-8-11 0 0 7 7 7 10 4" stroke="#f1fbe9" strokeWidth="3.2" />
          <path d="M2 24C0 16 14 3 25 2" stroke="#4f9e27" strokeWidth="1.8" />
        </Svg>
      </button>
      <Task icon={chrome} text="讲师课程..." />
      <Task icon={chrome} text="bwzbht.b..." />
      <button aria-label="QQ" className="flex w-[40px] justify-center"><Qq s={25} /></button>
      <button aria-label="图片" className="flex w-[67px] justify-center">
        <Svg w={27} h={25}><rect width="27" height="25" rx="3" fill="#f4f4f4" /><path d="M1 18L8 2l4 7-7 12z" fill="#2d9a3f" /><path d="M9 3c6 1 14 9 13 19l-9-3z" fill="#dd2a1c" /><path d="M9 3l4 16-7 4z" fill="#fff" /></Svg>
      </button>
      <Task text="微信" icon={
        <Svg w={28} h={24}><ellipse cx="11" cy="9" rx="10" ry="8.5" fill="#43b96a" /><ellipse cx="20" cy="16" rx="8" ry="7" fill="#eee" /><circle cx="8" cy="7" r="1.3" fill="#1f6d3c" /><circle cx="14" cy="7" r="1.3" fill="#1f6d3c" /><path d="M4 15l-1 5 5-3z" fill="#43b96a" /></Svg>} />
      <button aria-label="搜索" className="mr-[13px] flex w-[40px] justify-center">
        <Svg w={26} h={27}><path d="M1 0h25v20H1z" fill="#dfe9f3" /><path d="M1 0h25v4H1z" fill="#3c86c4" /><circle cx="14" cy="12" r="7" fill="#a9d3f1" stroke="#6f97b8" strokeWidth="2" /><path d="M9 18l-7 7" stroke="#b97d54" strokeWidth="4" /></Svg>
      </button>
      <Task className="mr-[6px] w-[115px]" text="master - ..." icon={
        <Svg w={28} h={25}><path d="M0 10c3 3 6 3 10 4L27 9c0 8-5 16-15 16C5 25 0 18 0 10z" fill="#d9482f" /><circle cx="19" cy="9" r="8.5" fill="#e8694d" /><path d="M13 11c-1-8 11-9 11-2 0 5-7 5-7 1 0-2 3-3 4-1" stroke="#ffd0bd" strokeWidth="1.5" /></Svg>} />
      <Task active className="mr-[5px] w-[124px]" text="k8s实战1..." icon={
        <Svg w={28} h={26}><path d="M12 4h15v18H12z" fill="#fff" /><path d="M18 7h7v3h-7zM18 12h7v2h-7zM18 16h7v2h-7z" fill="#d0442a" /><path d="M0 3l16-3v26L0 23z" fill="#d0442a" /><path d="M6 19V8h3c5 0 5 6 0 6H6" stroke="#fff" strokeWidth="2.2" /></Svg>} />
      <Task text="架构师团..." icon={
        <Svg w={27} h={27}><circle cx="13.5" cy="13.5" r="13" fill="#1f2629" /><path d="M13 13L1 10C3 4 8 1 13 1z" fill="#6cc7cf" /><path d="M13 14L3 20c2 4 6 6 10 6z" fill="#d6503d" /><path d="M15 15l9-3c2 6-3 12-9 14z" fill="#e8e4da" /><path d="M1 13l10 1-9 4z" fill="#fff" /><path d="M16 11l3-9 6 6z" fill="#5c6a70" /></Svg>} />
      <Task text="上课资料" icon={folder} />
      <Task text="share" icon={folder} />
      <Task text="北京校区..." icon={
        <Svg w={27} h={24}><path d="M13 2h13v20H13z" fill="#fff" stroke="#1e7145" strokeWidth="1.5" /><path d="M16 6h8M16 10h8M16 14h8M16 18h8M20 3v18" stroke="#1e7145" strokeWidth="1.5" /><path d="M0 2l15-2v24L0 22z" fill="#1e7145" /><path d="M4 7l7 10M11 7L4 17" stroke="#fff" strokeWidth="2" /></Svg>} />
      <Task className="w-[115px]" text="C:\Users..." icon={
        <Svg w={26} h={28}><path d="M1 2h20v25H1z" fill="#eef3ee" stroke="#8a9a8a" /><path d="M2 18c6-5 12 2 19-4v13H2z" fill="#5fb832" /><path d="M4 8h10M4 12h8" stroke="#6c8f9c" strokeWidth="2" /><path d="M24 3l-9 13-2 4 4-2 9-12z" fill="#efb33a" /></Svg>} />
      <div className="ml-auto flex h-full items-center pr-[5px]">
        <button aria-label="显示隐藏的图标" className="mr-[12px]"><Svg w={16} h={9}><path d="M1 8l7-7 7 7" stroke="#fff" strokeWidth="1.8" /></Svg></button>
        <button aria-label="麦克风" className="mr-[12px]"><Svg w={15} h={20}><rect x="4" y="0" width="7" height="14" rx="2" fill="#fff" /><path d="M1 9c0 9 13 9 13 0M7.5 14v5M4 19h7" stroke="#ccc" strokeWidth="1.8" /></Svg></button>
        <button aria-label="QQ 消息" className="mr-[9px]"><Svg w={20} h={21}><circle cx="10" cy="5" r="5" fill="#0c0c0c" /><path d="M3 9h13l3 8-6 3H5l-3-4z" fill="#e43a24" /><path d="M10 10h9v8h-9z" fill="#f1a634" /><ellipse cx="8" cy="15" rx="3" ry="4" fill="#fff" /></Svg></button>
        <button aria-label="安全卫士" className="mr-[8px]"><Svg w={20} h={20}><circle cx="10" cy="10" r="9.5" fill="#f7d51d" /><path d="M3 5C7 0 15 0 17 6L8 8z" fill="#8cc93a" /><circle cx="10" cy="10" r="6" fill="#f7e03a" /><path d="M10 6v8M6 10h8" stroke="#2c6b1c" strokeWidth="2.8" /></Svg></button>
        <button aria-label="网络" className="mr-[9px]"><Svg w={20} h={17}><path d="M5 3h14v9H5zM12 12v4M8 16h8M1 1h5v5H1zM3 6v9" stroke="#ddd" strokeWidth="1.5" /></Svg></button>
        <button aria-label="音量" className="mr-[10px]"><Svg w={20} h={16}><path d="M1 5h3l4-4v14l-4-4H1z" stroke="#ddd" strokeWidth="1.3" /><path d="M11 5c2 2 2 4 0 6M13.5 3c3 3 3 7 0 10M16 1c4 4 4 10 0 14" stroke="#ccc" strokeWidth="1.3" /></Svg></button>
        <button className="mr-[15px] w-[18px] text-[17px] font-bold">英</button>
        <button aria-label="搜狗输入法" className="mr-[14px]"><SogouS s={20} /></button>
        <time dateTime="2020-02-10T15:06:46" className="mr-[17px] flex w-[82px] flex-col items-center pb-[2px] text-[15px] leading-[23px] whitespace-nowrap"><span>15:06:46</span><span>2020/2/10</span></time>
        <button aria-label="通知" className="relative mr-[14px] h-[32px] w-[31px]">
          <Svg w={20} h={20} className="absolute top-[2px] left-0"><path d="M0 0h20v15h-5l-4 5v-5H0z" fill="#fff" /><path d="M3 4h14M3 7.5h14M3 11h9" stroke="#555" strokeWidth="1.3" /></Svg>
          <span className="absolute right-0 bottom-0 flex size-[21px] items-center justify-center rounded-full border border-[#888] bg-[#332f2b] text-[14px] font-bold text-white">1</span>
        </button>
        <span className="h-full w-px bg-[#6b6866]" />
      </div>
    </footer>
  );
}

export default function App() {
  return (
    <div className="relative flex h-screen min-w-[1600px] flex-col overflow-hidden border-r border-black bg-[#e6e6e6] font-['Open_Sans','Noto_Sans_CJK_SC',sans-serif]">
      <header className="shrink-0 bg-[#c35027]">
        <TitleBar />
        <TabRow />
      </header>
      <div className="relative flex h-[112px] shrink-0 border-b border-[#dcdcdc] bg-[#f1f1f1]">
        <Clipboard />
        <Slides />
        <FontGroup />
        <Paragraph />
        <Drawing />
        <Editing />
        <button aria-label="折叠功能区" className="mr-[13px] mb-[5px] ml-auto self-end">
          <Svg w={10} h={7}><path d="M1 6l4-5 4 5" stroke="#555" strokeWidth="1.8" /></Svg>
        </button>
      </div>
      <div className="flex min-h-0 flex-1">
        <ThumbPane />
        <Stage />
      </div>
      <StatusBar />
      <Taskbar />

      <EscHint />
      <SpeedBall />
      <SogouBar />
      <button aria-label="播放" className="absolute right-[42px] bottom-[125px]">
        <Svg w={76} h={66} className="drop-shadow">
          <path d="M22 3l12 12M54 3L42 15" stroke="#f8f8f8" strokeWidth="5" strokeLinecap="round" />
          <rect x="1" y="11" width="73" height="50" rx="11" fill="#f8f8f8" />
          <circle cx="20" cy="61" r="4.5" fill="#f8f8f8" /><circle cx="56" cy="61" r="4.5" fill="#f8f8f8" />
          <path d="M28 22c0-2 1-2 2-1l23 14c1 1 1 1 0 2L30 51c-1 1-2 0-2-1z" fill="#d8d8d8" stroke="#bdbdbd" />
        </Svg>
      </button>
    </div>
  );
}
